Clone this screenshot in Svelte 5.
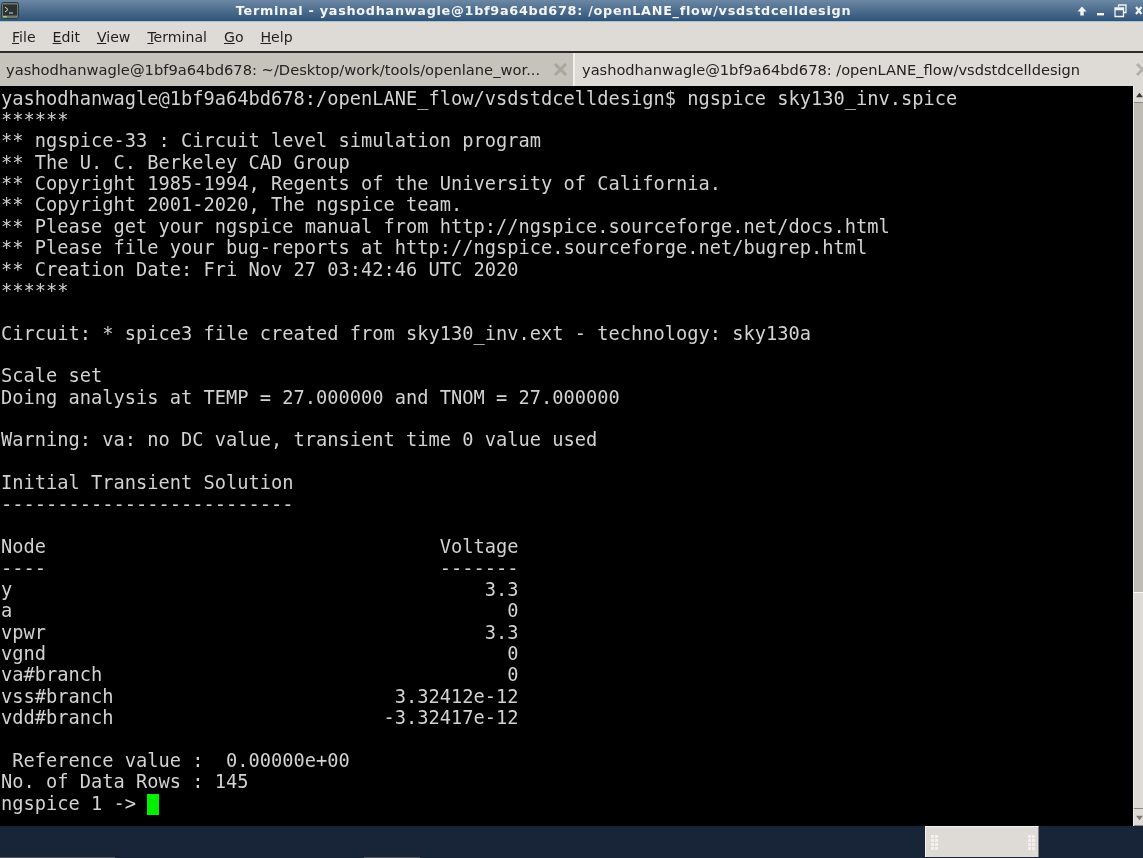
<script>
    const menus = [
        { key: "F", rest: "ile" },
        { key: "E", rest: "dit" },
        { key: "V", rest: "iew" },
        { key: "T", rest: "erminal" },
        { key: "G", rest: "o" },
        { key: "H", rest: "elp" },
    ];

    const output = `yashodhanwagle@1bf9a64bd678:/openLANE_flow/vsdstdcelldesign$ ngspice sky130_inv.spice
******
** ngspice-33 : Circuit level simulation program
** The U. C. Berkeley CAD Group
** Copyright 1985-1994, Regents of the University of California.
** Copyright 2001-2020, The ngspice team.
** Please get your ngspice manual from http://ngspice.sourceforge.net/docs.html
** Please file your bug-reports at http://ngspice.sourceforge.net/bugrep.html
** Creation Date: Fri Nov 27 03:42:46 UTC 2020
******

Circuit: * spice3 file created from sky130_inv.ext - technology: sky130a

Scale set
Doing analysis at TEMP = 27.000000 and TNOM = 27.000000

Warning: va: no DC value, transient time 0 value used

Initial Transient Solution
--------------------------

Node                                   Voltage
----                                   -------
y                                          3.3
a                                            0
vpwr                                       3.3
vgnd                                         0
va#branch                                    0
vss#branch                         3.32412e-12
vdd#branch                        -3.32417e-12

 Reference value :  0.00000e+00
No. of Data Rows : 145
ngspice 1 -> `;

    const gripDots = Array(8);
</script>

<div class="window">
    <header class="titlebar">
        <svg class="app-icon" width="18" height="17" viewBox="0 0 18 17">
            <rect x="0.5" y="0.5" width="17" height="16" rx="2" fill="#6d7a72" stroke="#2c3a38" />
            <rect x="2" y="2.5" width="14" height="11" fill="#2b3331" />
            <path d="M4 5l3 2.5-3 2.5M8 11h4" fill="none" stroke="#d5dbd5" stroke-width="1" />
            <rect x="2" y="14" width="4" height="1.5" fill="#9acb5a" />
        </svg>
        <span class="title">Terminal - yashodhanwagle@1bf9a64bd678: /openLANE_flow/vsdstdcelldesign</span>
        <div class="controls">
            <svg width="12" height="12" viewBox="0 0 12 12"><path d="M6 1.5L10.5 6.5H7.7V10.5H4.3V6.5H1.5Z" fill="#f2f4f6" /></svg>
            <svg width="10" height="12" viewBox="0 0 10 12"><rect x="1" y="8" width="7" height="2.4" fill="#f2f4f6" /></svg>
            <svg width="13" height="14" viewBox="0 0 13 14"><path d="M4.5 3V1h7.5v7.5h-2.5M1 4h8.5v8.500H1ZM1 5.500h8.500" fill="none" stroke="#f2f4f6" stroke-width="1.300" /></svg>
            <svg width="9" height="12" viewBox="0 0 9 12"><path d="M1 2l5.500 7M6.500 2L1 9" stroke="#f2f4f6" stroke-width="2.200" fill="none" /></svg>
        </div>
    </header>

    <nav class="menubar">
        {#each menus as m}
            <span class="menu"><u>{m.key}</u>{m.rest}</span>
        {/each}
    </nav>

    <div class="tabs">
        <div class="tab inactive">
            <span class="tab-label">yashodhanwagle@1bf9a64bd678: ~/Desktop/work/tools/openlane_wor...</span>
            <svg class="tab-close" width="15" height="15" viewBox="0 0 15 15"><path d="M2 2l11 11M13 2L2 13" stroke="#a9a69f" stroke-width="3" fill="none" /></svg>
        </div>
        <div class="tab active">
            <span class="tab-label">yashodhanwagle@1bf9a64bd678: /openLANE_flow/vsdstdcelldesign</span>
            <svg class="tab-close" width="15" height="15" viewBox="0 0 15 15"><path d="M2 2l11 11M13 2L2 13" stroke="#b3b0a9" stroke-width="3" fill="none" /></svg>
        </div>
    </div>

    <div class="terminal">
        <pre class="screen">{output}<span class="cursor"></span></pre>
        <div class="scrollbar">
            <div class="sb-btn"><svg width="9" height="6" viewBox="0 0 9 6"><path d="M4.500 0L9 6H0Z" fill="#3a3a38" /></svg></div>
            <div class="sb-trough"></div>
            <div class="sb-thumb"></div>
            <div class="sb-btn"><svg width="9" height="6" viewBox="0 0 9 6"><path d="M0 0H9L4.500 6Z" fill="#7b7a76" /></svg></div>
        </div>
    </div>

    <footer class="panel">
        <span class="sliver first"></span>
        <span class="sliver second"></span>
        <div class="tray">
            <div class="grip">{#each gripDots as _}<i></i>{/each}</div>
            <div class="grip">{#each gripDots as _}<i></i>{/each}</div>
        </div>
    </footer>
</div>

<style>
    :global(body) {
        margin: 0;
        background: #000;
    }

    .window {
        width: 1143px;
        height: 858px;
        display: flex;
        flex-direction: column;
        overflow: hidden;
        font-family: "DejaVu Sans", sans-serif;
        filter: blur(0.45px);
    }

    .titlebar {
        height: 21px;
        flex: none;
        display: flex;
        align-items: center;
        background: linear-gradient(#6b87a3, #2f5379);
        border-bottom: 1px solid #a9c0cf;
    }

    .app-icon {
        margin-left: 1px;
    }

    .title {
        flex: 1;
        text-align: center;
        padding-right: 8px;
        color: #f4f5f6;
        font-size: 12.800px;
        font-weight: 700;
        letter-spacing: 0.72px;
        white-space: nowrap;
    }

    .controls {
        display: flex;
        align-items: center;
        gap: 8px;
        margin-right: -1px;
    }

    .menubar {
        height: 29px;
        flex: none;
        display: flex;
        align-items: center;
        gap: 17px;
        padding-left: 12px;
        background: #dedbd6;
        border-bottom: 2px solid #2d2c2a;
    }

    .menu {
        color: #1f1f1f;
        font-size: 14.100px;
    }

    .tabs {
        height: 33px;
        flex: none;
        display: flex;
        background: #c4c1ba;
    }

    .tab {
        display: flex;
        align-items: center;
        min-width: 0;
        color: #222;
        font-size: 14.680px;
        white-space: nowrap;
    }

    .tab.inactive {
        width: 575px;
        flex: none;
        padding-left: 6px;
        box-sizing: border-box;
        background: #c6c3bc;
        border-right: 2px solid #f1efeb;
    }

    .tab.active {
        flex: 1;
        padding-left: 7px;
        background: #dedbd6;
        font-size: 14.600px;
    }

    .tab-label {
        flex: 1;
    }

    .tab.inactive .tab-close {
        margin-right: 5px;
    }

    .tab.active .tab-close {
        margin-right: -7px;
    }

    .terminal {
        flex: 1;
        min-height: 0;
        display: flex;
        background: #000;
    }

    .screen {
        flex: 1;
        margin: 0;
        padding: 1.700px 0 0 1px;
        color: #d2d2d2;
        font-family: "DejaVu Sans Mono", monospace;
        font-size: 18.700px;
        line-height: 21.360px;
        white-space: pre;
        overflow: hidden;
    }

    .cursor {
        display: inline-block;
        width: 12px;
        height: 21px;
        vertical-align: -5px;
        background: #00f000;
    }

    .scrollbar {
        width: 9px;
        flex: none;
        display: flex;
        flex-direction: column;
        border-left: 1px solid #efede9;
    }

    .sb-btn {
        height: 17px;
        flex: none;
        display: flex;
        align-items: center;
        padding-left: 2px;
        overflow: hidden;
        background: #dedbd6;
        box-shadow: inset 0 -1px 0 #8d8b86;
    }

    .sb-trough {
        flex: 1;
        background: #bfbcb5;
    }

    .sb-thumb {
        height: 217px;
        flex: none;
        background: #dedbd6;
        border-top: 1px solid #f7f6f3;
        box-sizing: border-box;
        box-shadow: inset 0 -1px 0 #8d8b86;
    }

    .panel {
        height: 32px;
        flex: none;
        position: relative;
        display: flex;
        justify-content: flex-end;
        padding-right: 104px;
        box-sizing: border-box;
        background: #182538;
    }

    /* tops of the taskbar buttons cut off by the screen edge */
    .sliver {
        position: absolute;
        bottom: 0;
        height: 1px;
        background: #55595f;
    }

    .sliver.first {
        left: 0;
        width: 115px;
    }

    .sliver.second {
        left: 364px;
        width: 56px;
    }

    .tray {
        width: 114px;
        height: 31px;
        box-sizing: border-box;
        display: flex;
        align-items: center;
        justify-content: space-between;
        padding: 0 3px 0 5px;
        background: #dedbd6;
        border-left: 1px solid #f4f3f0;
        border-top: 1px solid #f4f3f0;
        border-right: 1px solid #7f7e7a;
    }

    .grip {
        display: grid;
        grid-template-columns: repeat(2, 3px);
        gap: 1px;
    }

    .grip i {
        height: 3px;
        background: #f2f0ec;
    }
</style>
